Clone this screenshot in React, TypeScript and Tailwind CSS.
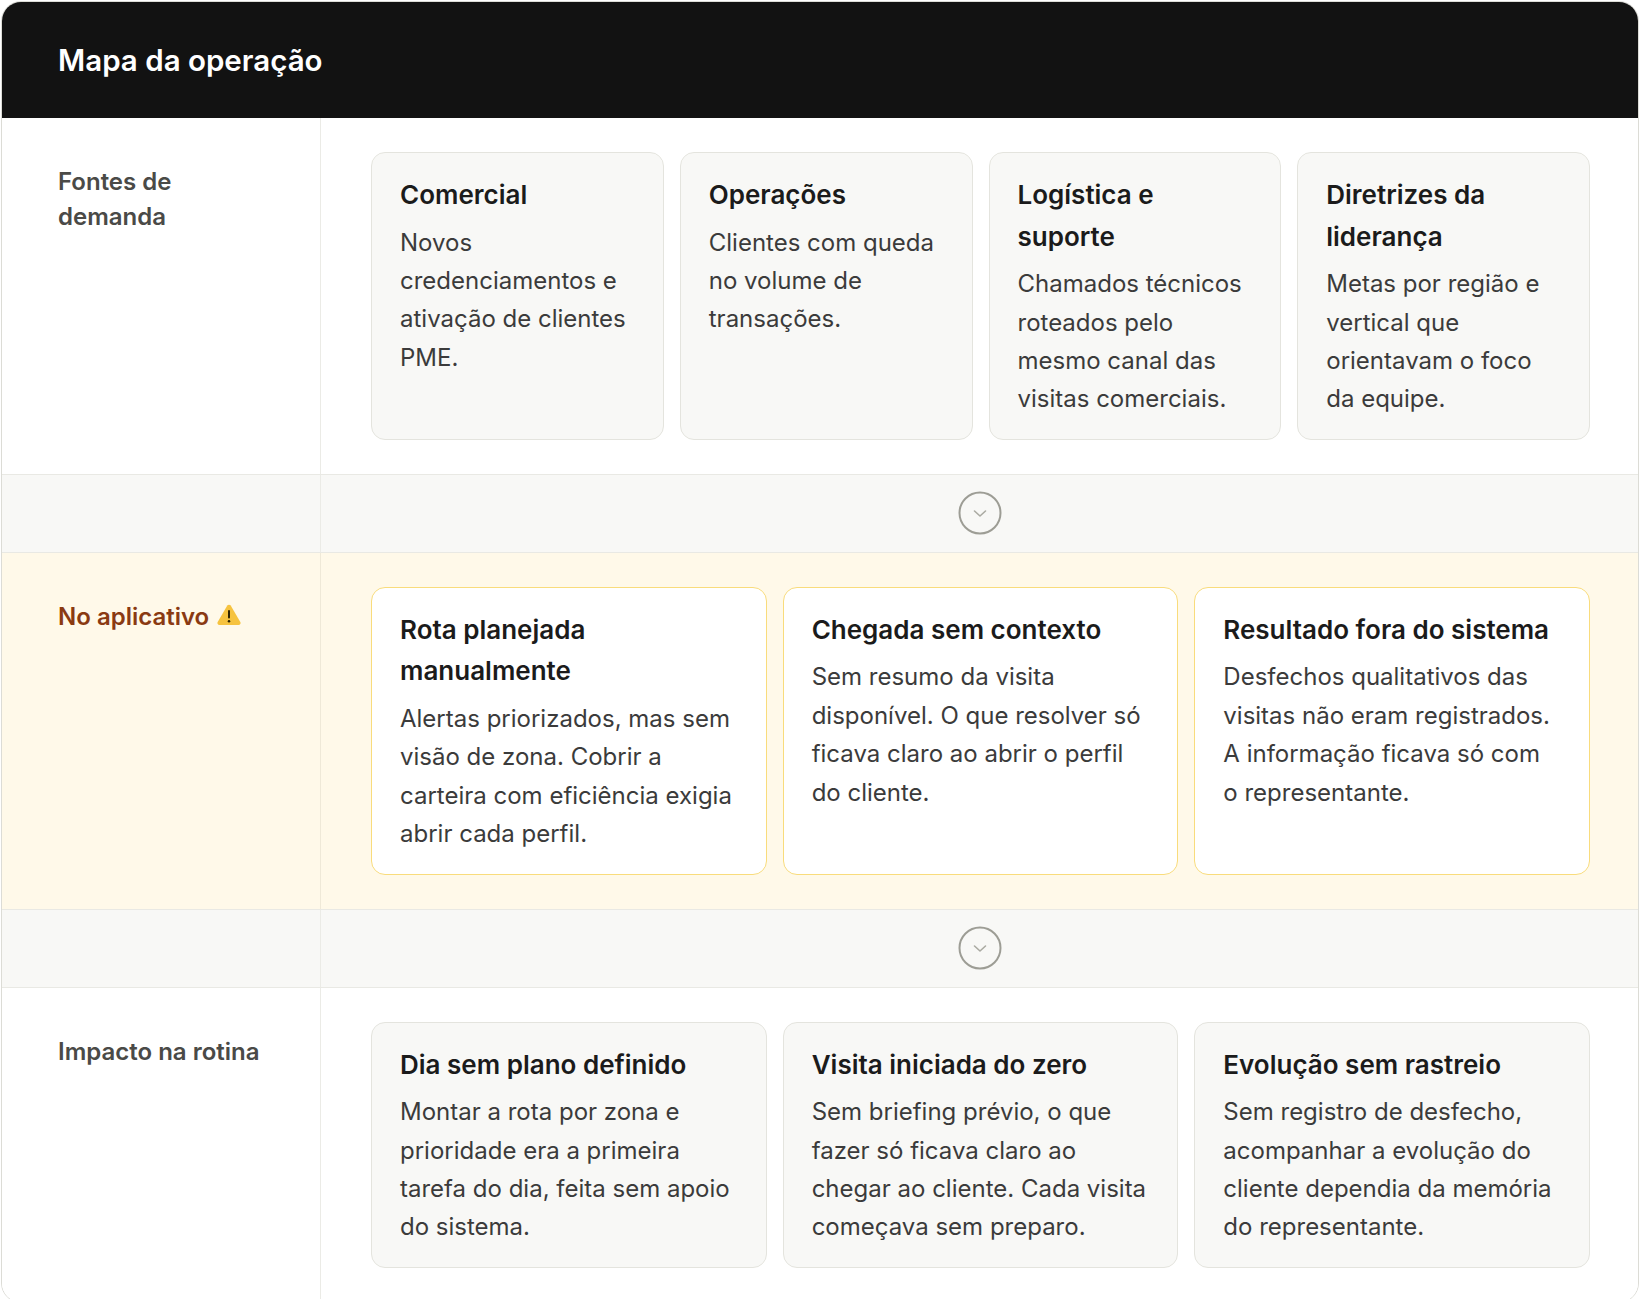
import React from "react";

type Card = { title: string; body: string };

const fontes: Card[] = [
  { title: "Comercial", body: "Novos credenciamentos e ativação de clientes PME." },
  { title: "Operações", body: "Clientes com queda no volume de transações." },
  { title: "Logística e suporte", body: "Chamados técnicos roteados pelo mesmo canal das visitas comerciais." },
  { title: "Diretrizes da liderança", body: "Metas por região e vertical que orientavam o foco da equipe." },
];

const noApp: Card[] = [
  {
    title: "Rota planejada manualmente",
    body: "Alertas priorizados, mas sem visão de zona. Cobrir a carteira com eficiência exigia abrir cada perfil.",
  },
  {
    title: "Chegada sem contexto",
    body: "Sem resumo da visita disponível. O que resolver só ficava claro ao abrir o perfil do cliente.",
  },
  {
    title: "Resultado fora do sistema",
    body: "Desfechos qualitativos das visitas não eram registrados. A informação ficava só com o representante.",
  },
];

const impacto: Card[] = [
  {
    title: "Dia sem plano definido",
    body: "Montar a rota por zona e prioridade era a primeira tarefa do dia, feita sem apoio do sistema.",
  },
  {
    title: "Visita iniciada do zero",
    body: "Sem briefing prévio, o que fazer só ficava claro ao chegar ao cliente. Cada visita começava sem preparo.",
  },
  {
    title: "Evolução sem rastreio",
    body: "Sem registro de desfecho, acompanhar a evolução do cliente dependia da memória do representante.",
  },
];

function WarningIcon() {
  return (
    <svg width="24" height="21" viewBox="0 0 24 21" className="ml-2 inline-block align-baseline">
      <path
        d="M10.3 1.6a2 2 0 0 1 3.4 0l9.6 16.4a2 2 0 0 1-1.7 3H2.4a2 2 0 0 1-1.7-3Z"
        fill="#f6c33f"
      />
      <rect x="11" y="6" width="2" height="8.5" rx="1" fill="#2e2400" />
      <circle cx="12" cy="17.2" r="1.25" fill="#2e2400" />
    </svg>
  );
}

function InfoCard({ card, warn }: { card: Card; warn?: boolean }) {
  return (
    <div
      className={
        warn
          ? "rounded-[14px] border border-[#f9dc7c] bg-white px-7 pb-5 pt-[21px]"
          : "rounded-[14px] border border-[#e4e4de] bg-[#f8f8f6] px-7 pb-5 pt-[21px]"
      }
    >
      <h3 className="mb-[8px] text-[26px] font-semibold leading-[41.6px] text-[#1b1b1b]">{card.title}</h3>
      <p className="text-[24px] leading-[38.4px] text-[#3b3b3b]">{card.body}</p>
    </div>
  );
}

function Row({
  label,
  cards,
  warn,
  last,
}: {
  label: React.ReactNode;
  cards: Card[];
  warn?: boolean;
  last?: boolean;
}) {
  return (
    <div
      className={
        "grid grid-cols-[319px_1fr] " +
        (last ? "" : "border-b border-[#e9e9e4] ") +
        (warn ? "bg-[#fff9e9]" : "bg-white")
      }
    >
      <div
        className={
          "border-r pl-14 pr-6 pt-[46px] text-[24px] font-semibold leading-[35px] " +
          (warn ? "border-[#efe9d8] text-[#8a3a12]" : "border-[#ebebe6] text-[#4a4a47]")
        }
      >
        <div className="max-w-[212px]">{label}</div>
      </div>
      <div
        className={
          "grid gap-4 py-[34px] pl-[50px] pr-12 " + (cards.length === 4 ? "grid-cols-4" : "grid-cols-3")
        }
      >
        {cards.map((c) => (
          <InfoCard key={c.title} card={c} warn={warn} />
        ))}
      </div>
    </div>
  );
}

function Divider() {
  return (
    <div className="grid grid-cols-[319px_1fr] border-b border-[#e9e9e4] bg-[#f8f8f6]">
      <div className="border-r border-[#ebebe6]" />
      <div className="flex h-[77px] items-center justify-center">
        <svg width="44" height="44" viewBox="0 0 44 44">
          <circle cx="22" cy="22" r="20.5" fill="none" stroke="#9d9d95" strokeWidth="2" />
          <path d="M16.5 20 L22 25 L27.5 20" fill="none" stroke="#aaaaa2" strokeWidth="1.6" strokeLinecap="round" strokeLinejoin="round" />
        </svg>
      </div>
    </div>
  );
}

export default function App() {
  return (
    <div className="min-h-screen bg-white p-px font-['Inter','Noto_Sans',sans-serif] antialiased">
      <div className="overflow-hidden rounded-[20px] border border-[#dcdcd6] bg-white">
        <header className="flex h-[116px] items-center bg-[#121212] px-14">
          <h1 className="text-[29.5px] font-semibold text-white">Mapa da operação</h1>
        </header>
        <Row label="Fontes de demanda" cards={fontes} />
        <Divider />
        <Row
          label={
            <span>
              No aplicativo
              <WarningIcon />
            </span>
          }
          cards={noApp}
          warn
        />
        <Divider />
        <Row label="Impacto na rotina" cards={impacto} last />
      </div>
    </div>
  );
}
